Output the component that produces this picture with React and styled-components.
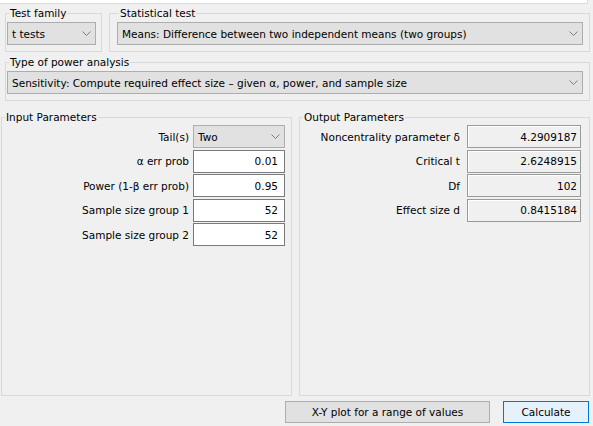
import React from "react";
import styled, { createGlobalStyle } from "styled-components";

const Global = createGlobalStyle`
  html, body { margin: 0; padding: 0; background: #f0f0f0; }
  body { font-family: "DejaVu Sans", "Liberation Sans", sans-serif; font-size: 10.5px; color: #000; }
  * { box-sizing: border-box; }
`;

const Page = styled.div`
  width: 593px;
  height: 426px;
  display: flex;
  flex-direction: column;
  background: #f0f0f0;
  overflow: hidden;
`;

const TopStrip = styled.div`
  width: 588px;
  height: 4px;
  flex: none;
  background: #fff;
  border-bottom: 1px solid #d9d9d9;
  border-right: 1px solid #d9d9d9;
`;

const Row = styled.div`
  display: flex;
  gap: ${(p) => p.$gap || 0}px;
  margin-top: ${(p) => p.$mt || 0}px;
  padding-left: ${(p) => p.$pl || 0}px;
  flex: none;
`;

const Group = styled.fieldset`
  margin: 0;
  width: ${(p) => p.$w}px;
  height: ${(p) => p.$h}px;
  border: 1px solid #d9d9d9;
  padding: 2px ${(p) => p.$pr || 6}px 0 ${(p) => p.$pl || 1}px;
  min-width: 0;
`;

const Legend = styled.legend`
  margin-left: 2px;
  padding: 0 1px;
  line-height: 13px;
  height: 13px;
  font-size: 10.5px;
`;

const Combo = styled.div`
  height: 23px;
  width: ${(p) => (p.$w ? p.$w + "px" : "100%")};
  background: #e1e1e1;
  border: 1px solid #adadad;
  display: flex;
  align-items: center;
  justify-content: space-between;
  padding: 0 4px 0 4px;
  white-space: nowrap;
`;

const Chevron = () => (
  <svg width="9" height="5" viewBox="0 0 9 5" style={{ display: "block", flex: "none" }}>
    <path d="M0.5 0.5 L4.5 4.5 L8.5 0.5" fill="none" stroke="#707070" strokeWidth="0.9" />
  </svg>
);

const ParamGrid = styled.div`
  display: grid;
  grid-template-columns: 1fr ${(p) => p.$field}px;
  column-gap: ${(p) => p.$gap}px;
  row-gap: 1.5px;
  grid-auto-rows: 23px;
  margin-top: -1px;
`;

const Label = styled.div`
  text-align: right;
  align-self: center;
  white-space: nowrap;
`;

const Field = styled.div`
  height: 23px;
  display: flex;
  align-items: center;
  justify-content: flex-end;
  padding-right: ${(p) => (p.$out ? 3 : 6)}px;
  background: ${(p) => (p.$out ? "#f0f0f0" : "#fff")};
  border: 1px solid ${(p) => (p.$out ? "#9a9a9a" : "#7a7a7a")};
  box-shadow: ${(p) => (p.$out ? "inset 1px 1px 0 #fff" : "none")};
`;

const ButtonRow = styled.div`
  display: flex;
  justify-content: flex-end;
  gap: 13px;
  margin-top: 5px;
  padding-right: 4px;
  flex: none;
`;

const Button = styled.div`
  height: 22px;
  width: ${(p) => p.$w}px;
  display: flex;
  align-items: center;
  justify-content: center;
  background: ${(p) => (p.$primary ? "#e5f1fb" : "#e1e1e1")};
  border: 1px solid ${(p) => (p.$primary ? "#0078d7" : "#adadad")};
`;

const inputs = [
  ["α err prob", "0.01"],
  ["Power (1-β err prob)", "0.95"],
  ["Sample size group 1", "52"],
  ["Sample size group 2", "52"],
];

const outputs = [
  ["Noncentrality parameter δ", "4.2909187"],
  ["Critical t", "2.6248915"],
  ["Df", "102"],
  ["Effect size d", "0.8415184"],
];

export default function App() {
  return (
    <>
      <Global />
      <Page>
        <TopStrip />
        <Row $mt={3} $pl={5} $gap={7}>
          <Group $w={97} $h={45} $pl={1} $pr={5}>
            <Legend>Test family</Legend>
            <Combo>
              <span>t tests</span>
              <Chevron />
            </Combo>
          </Group>
          <Group $w={481} $h={45} $pl={7} $pr={6}>
            <Legend>Statistical test</Legend>
            <Combo>
              <span>Means: Difference between two independent means (two groups)</span>
              <Chevron />
            </Combo>
          </Group>
        </Row>
        <Row $mt={4} $pl={5}>
          <Group $w={585} $h={45} $pl={1} $pr={6}>
            <Legend>Type of power analysis</Legend>
            <Combo>
              <span>Sensitivity: Compute required effect size – given α, power, and sample size</span>
              <Chevron />
            </Combo>
          </Group>
        </Row>
        <Row $mt={10} $pl={1} $gap={7}>
          <Group $w={291} $h={285} $pl={1} $pr={6}>
            <Legend>Input Parameters</Legend>
            <ParamGrid $field={92} $gap={4}>
              <Label>Tail(s)</Label>
              <Combo>
                <span>Two</span>
                <Chevron />
              </Combo>
              {inputs.map(([l, v]) => (
                <React.Fragment key={l}>
                  <Label>{l}</Label>
                  <Field>{v}</Field>
                </React.Fragment>
              ))}
            </ParamGrid>
          </Group>
          <Group $w={291} $h={285} $pl={1} $pr={8}>
            <Legend>Output Parameters</Legend>
            <ParamGrid $field={114} $gap={7}>
              {outputs.map(([l, v]) => (
                <React.Fragment key={l}>
                  <Label>{l}</Label>
                  <Field $out>{v}</Field>
                </React.Fragment>
              ))}
            </ParamGrid>
          </Group>
        </Row>
        <ButtonRow>
          <Button $w={205}>X-Y plot for a range of values</Button>
          <Button $w={86} $primary>Calculate</Button>
        </ButtonRow>
      </Page>
    </>
  );
}
